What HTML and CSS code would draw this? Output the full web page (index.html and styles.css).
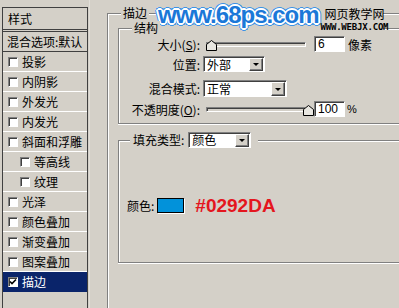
FILE: index.html
```html
<!DOCTYPE html>
<html lang="zh">
<head>
<meta charset="utf-8">
<link rel="stylesheet" href="styles.css">
</head>
<body>
<div class="dialog">
  <div class="styles-panel">
    <div class="panel-head">样式</div>
    <div class="panel-blend">混合选项:默认</div>
    <ul class="style-list">
      <li class="item"><span class="cb"></span>投影</li>
      <li class="item"><span class="cb"></span>内阴影</li>
      <li class="item"><span class="cb"></span>外发光</li>
      <li class="item"><span class="cb"></span>内发光</li>
      <li class="item"><span class="cb"></span>斜面和浮雕</li>
      <li class="item sub"><span class="cb"></span>等高线</li>
      <li class="item sub"><span class="cb"></span>纹理</li>
      <li class="item"><span class="cb"></span>光泽</li>
      <li class="item"><span class="cb"></span>颜色叠加</li>
      <li class="item"><span class="cb"></span>渐变叠加</li>
      <li class="item"><span class="cb"></span>图案叠加</li>
      <li class="item selected"><span class="cb"><svg width="8" height="8" viewBox="0 0 8 8"><path d="M1 3.5 L3 5.5 L7 1.5" fill="none" stroke="#000" stroke-width="1.6"/></svg></span>描边</li>
    </ul>
  </div>
  <div class="sep"></div>
  <div class="main">
    <div class="group outer">
      <span class="legend">描边</span>
      <div class="group struct">
        <span class="legend legend-top">结构</span>
        <div class="frow">
          <span class="flabel">大小(<u>S</u>):</span>
          <div class="slider">
            <div class="track"></div>
            <svg class="thumb thumb-min" width="11" height="11" viewBox="0 0 11 11"><path d="M0.5 10.5 V4.5 L5.5 0.5 L10.5 4.5 V10.5 Z" fill="#e8e6e0" stroke="#000"/></svg>
          </div>
          <span class="num">6</span>
          <span class="unit">像素</span>
        </div>
        <div class="frow r2">
          <span class="flabel">位置:</span>
          <div class="select sel-pos">外部<span class="btn"><span class="arrow"></span></span></div>
        </div>
        <div class="frow r3">
          <span class="flabel">混合模式:</span>
          <div class="select sel-mode">正常<span class="btn"><span class="arrow"></span></span></div>
        </div>
        <div class="frow r4">
          <span class="flabel">不透明度(<u>O</u>):</span>
          <div class="slider">
            <div class="track"></div>
            <svg class="thumb thumb-max" width="11" height="11" viewBox="0 0 11 11"><path d="M0.5 10.5 V4.5 L5.5 0.5 L10.5 4.5 V10.5 Z" fill="#e8e6e0" stroke="#000"/></svg>
          </div>
          <span class="num">100</span>
          <span class="unit pct">%</span>
        </div>
      </div>
      <div class="group fill">
        <div class="legend fill-legend">
          <span>填充类型:</span>
          <div class="select sel-fill">颜色<span class="btn"><span class="arrow"></span></span></div>
        </div>
        <div class="color-row">
          <span>颜色:</span>
          <span class="swatch"></span>
          <span class="hex">#0292DA</span>
        </div>
      </div>
    </div>
  </div>
  <div class="watermark">
    <span class="wm-site">www.68ps.com</span>
    <div class="wm-cn">
      <span class="wm-cn-title">网页教学网</span>
      <span class="wm-cn-url">WWW.WEBJX.COM</span>
    </div>
  </div>
</div>
</body>
</html>
```
FILE: styles.css
```css
* { box-sizing: border-box; }
html, body { margin: 0; padding: 0; }
body {
  width: 399px;
  height: 308px;
  overflow: hidden;
  background: #d4d0c8;
  font: 12px "Noto Sans CJK SC", "Noto Sans", sans-serif;
  color: #000;
}
.dialog {
  position: relative;
  display: flex;
  height: 308px;
  overflow: hidden;
}

/* left list */
.styles-panel {
  flex: none;
  width: 86px;
  height: 330px;
  margin: 7px 0 0 2px;
  border: 1px solid #404040;
  border-bottom: none;
}
.panel-head {
  height: 24px;
  line-height: 21px;
  padding-left: 5px;
  border-bottom: 3px double #404040;
}
.panel-blend {
  height: 20px;
  line-height: 19px;
  padding-left: 4px;
  border-bottom: 1px solid #404040;
  white-space: nowrap;
}
.style-list { list-style: none; margin: 0; padding: 0; }
.item {
  height: 20px;
  display: flex;
  align-items: center;
  gap: 4px;
  padding-left: 5px;
  border-bottom: 1px solid #fff;
  white-space: nowrap;
}
.item.sub { padding-left: 17px; }
.item.selected { background: #0a246a; color: #fff; border-bottom-color: #0a246a; }
.cb {
  flex: none;
  width: 10px;
  height: 10px;
  background: #fff;
  border: 1px solid;
  border-color: #808080 #fff #fff #808080;
  box-shadow: inset 1px 1px 0 #404040;
  display: flex;
  align-items: center;
  justify-content: center;
}
.cb svg { display: block; }

.sep {
  flex: none;
  width: 1px;
  margin-left: 1px;
  background: #e2dfd9;
}

/* right side */
.main {
  flex: 1;
  margin: 13px 0 0 17px;
}
.group {
  position: relative;
  border: 1px solid #808080;
  border-right: none;
  box-shadow: inset 1px 1px 0 #fff, 0 1px 0 #fff;
}
.outer {
  height: 400px;
  border-bottom: none;
  padding: 14px 0 0 10px;
}
.legend {
  position: absolute;
  top: -8px;
  left: 13px;
  line-height: 14px;
  padding: 0 2px;
  background: #d4d0c8;
}
.legend-top { z-index: 2; }
.struct {
  height: 96px;
  padding-top: 7px;
}
.frow {
  display: flex;
  align-items: center;
  height: 16px;
}
.r2 { margin-top: 4px; }
.r3 { margin-top: 8px; height: 17px; }
.r4 { margin-top: 4px; }
.flabel {
  flex: none;
  width: 81px;
  margin-right: 3px;
  text-align: right;
  white-space: nowrap;
}
.flabel u { text-decoration-thickness: 1px; }
.slider {
  position: relative;
  flex: none;
  width: 107px;
  height: 16px;
  margin-left: 2px;
}
.track {
  position: absolute;
  left: 1px;
  right: 6px;
  top: 6px;
  height: 5px;
  border: 1px solid;
  border-color: #808080 #fff #fff #808080;
  box-shadow: inset 1px 1px 0 #404040;
}
.thumb { position: absolute; top: 4px; display: block; }
.thumb-min { left: 1px; }
.thumb-max { left: 98px; }
.num {
  flex: none;
  width: 31px;
  height: 16px;
  margin-left: 2px;
  padding-left: 3px;
  background: #fff;
  border: 1px solid;
  border-color: #808080 #fff #fff #808080;
  box-shadow: inset 1px 1px 0 #404040;
  font: 12px/14px "Liberation Sans", sans-serif;
}
.unit { margin-left: 3px; }
.pct { margin-left: 2px; font: 11px "Liberation Sans", sans-serif; }

.select {
  position: relative;
  flex: none;
  height: 16px;
  display: flex;
  align-items: center;
  padding-left: 3px;
  background: #fff;
  border: 1px solid;
  border-color: #808080 #fff #fff #808080;
  box-shadow: inset 1px 1px 0 #404040;
  white-space: nowrap;
}
.sel-pos { width: 62px; }
.sel-mode { width: 84px; height: 17px; }
.sel-fill { width: 63px; }
.btn {
  position: absolute;
  right: 1px;
  top: 1px;
  bottom: 0;
  width: 14px;
  background: #d4d0c8;
  border: 1px solid;
  border-color: #fff #404040 #404040 #fff;
  box-shadow: inset -1px -1px 0 #808080;
  display: flex;
  align-items: center;
  justify-content: center;
}
.arrow {
  width: 0;
  height: 0;
  border-left: 3px solid transparent;
  border-right: 3px solid transparent;
  border-top: 3px solid #000;
}

.fill {
  margin-top: 16px;
  height: 123px;
  padding: 56px 0 0 8px;
}
.fill-legend {
  top: -9px;
  left: 11px;
  padding: 0 7px 0 3px;
  display: flex;
  align-items: center;
  gap: 4px;
  height: 16px;
}
.color-row {
  display: flex;
  align-items: center;
  height: 17px;
}
.swatch {
  width: 27px;
  height: 15px;
  margin-left: 3px;
  background: #0292da;
  border: 1px solid #000;
  box-shadow: 1px 1px 0 #fff;
}
.hex {
  margin-left: 11px;
  color: #e4161e;
  font: bold 19px/17px "Liberation Sans", sans-serif;
}

/* watermark overlay */
.watermark {
  position: absolute;
  left: 156px;
  top: 0;
  width: 227px;
  height: 31px;
  display: flex;
  align-items: flex-start;
  background: #d4d0c8;
}
.wm-site {
  padding: 3px 0 0 2px;
  font: bold 24px/24px "Liberation Sans", sans-serif;
  letter-spacing: -1px;
  color: #1b78d8;
  text-shadow:
    1px 0 0 #fff, -1px 0 0 #fff, 0 1px 0 #fff, 0 -1px 0 #fff,
    1px 1px 0 #fff, -1px -1px 0 #fff, 1px -1px 0 #fff, -1px 1px 0 #fff,
    2px 0 0 #fff, -2px 0 0 #fff, 0 2px 0 #fff, 0 -2px 0 #fff,
    3px 0 0 #3d93e6, -3px 0 0 #3d93e6, 0 3px 0 #3d93e6, 0 -3px 0 #3d93e6,
    2px 2px 0 #3d93e6, -2px -2px 0 #3d93e6, 2px -2px 0 #3d93e6, -2px 2px 0 #3d93e6;
}
.wm-cn {
  display: flex;
  flex-direction: column;
  align-items: center;
  margin-left: 2px;
  padding-top: 7px;
}
.wm-cn-title {
  font-size: 12px;
  line-height: 14px;
}
.wm-cn-url {
  margin-top: 2px;
  font: bold 9px/8px "DejaVu Sans Mono", monospace;
  letter-spacing: -0.2px;
}
```
